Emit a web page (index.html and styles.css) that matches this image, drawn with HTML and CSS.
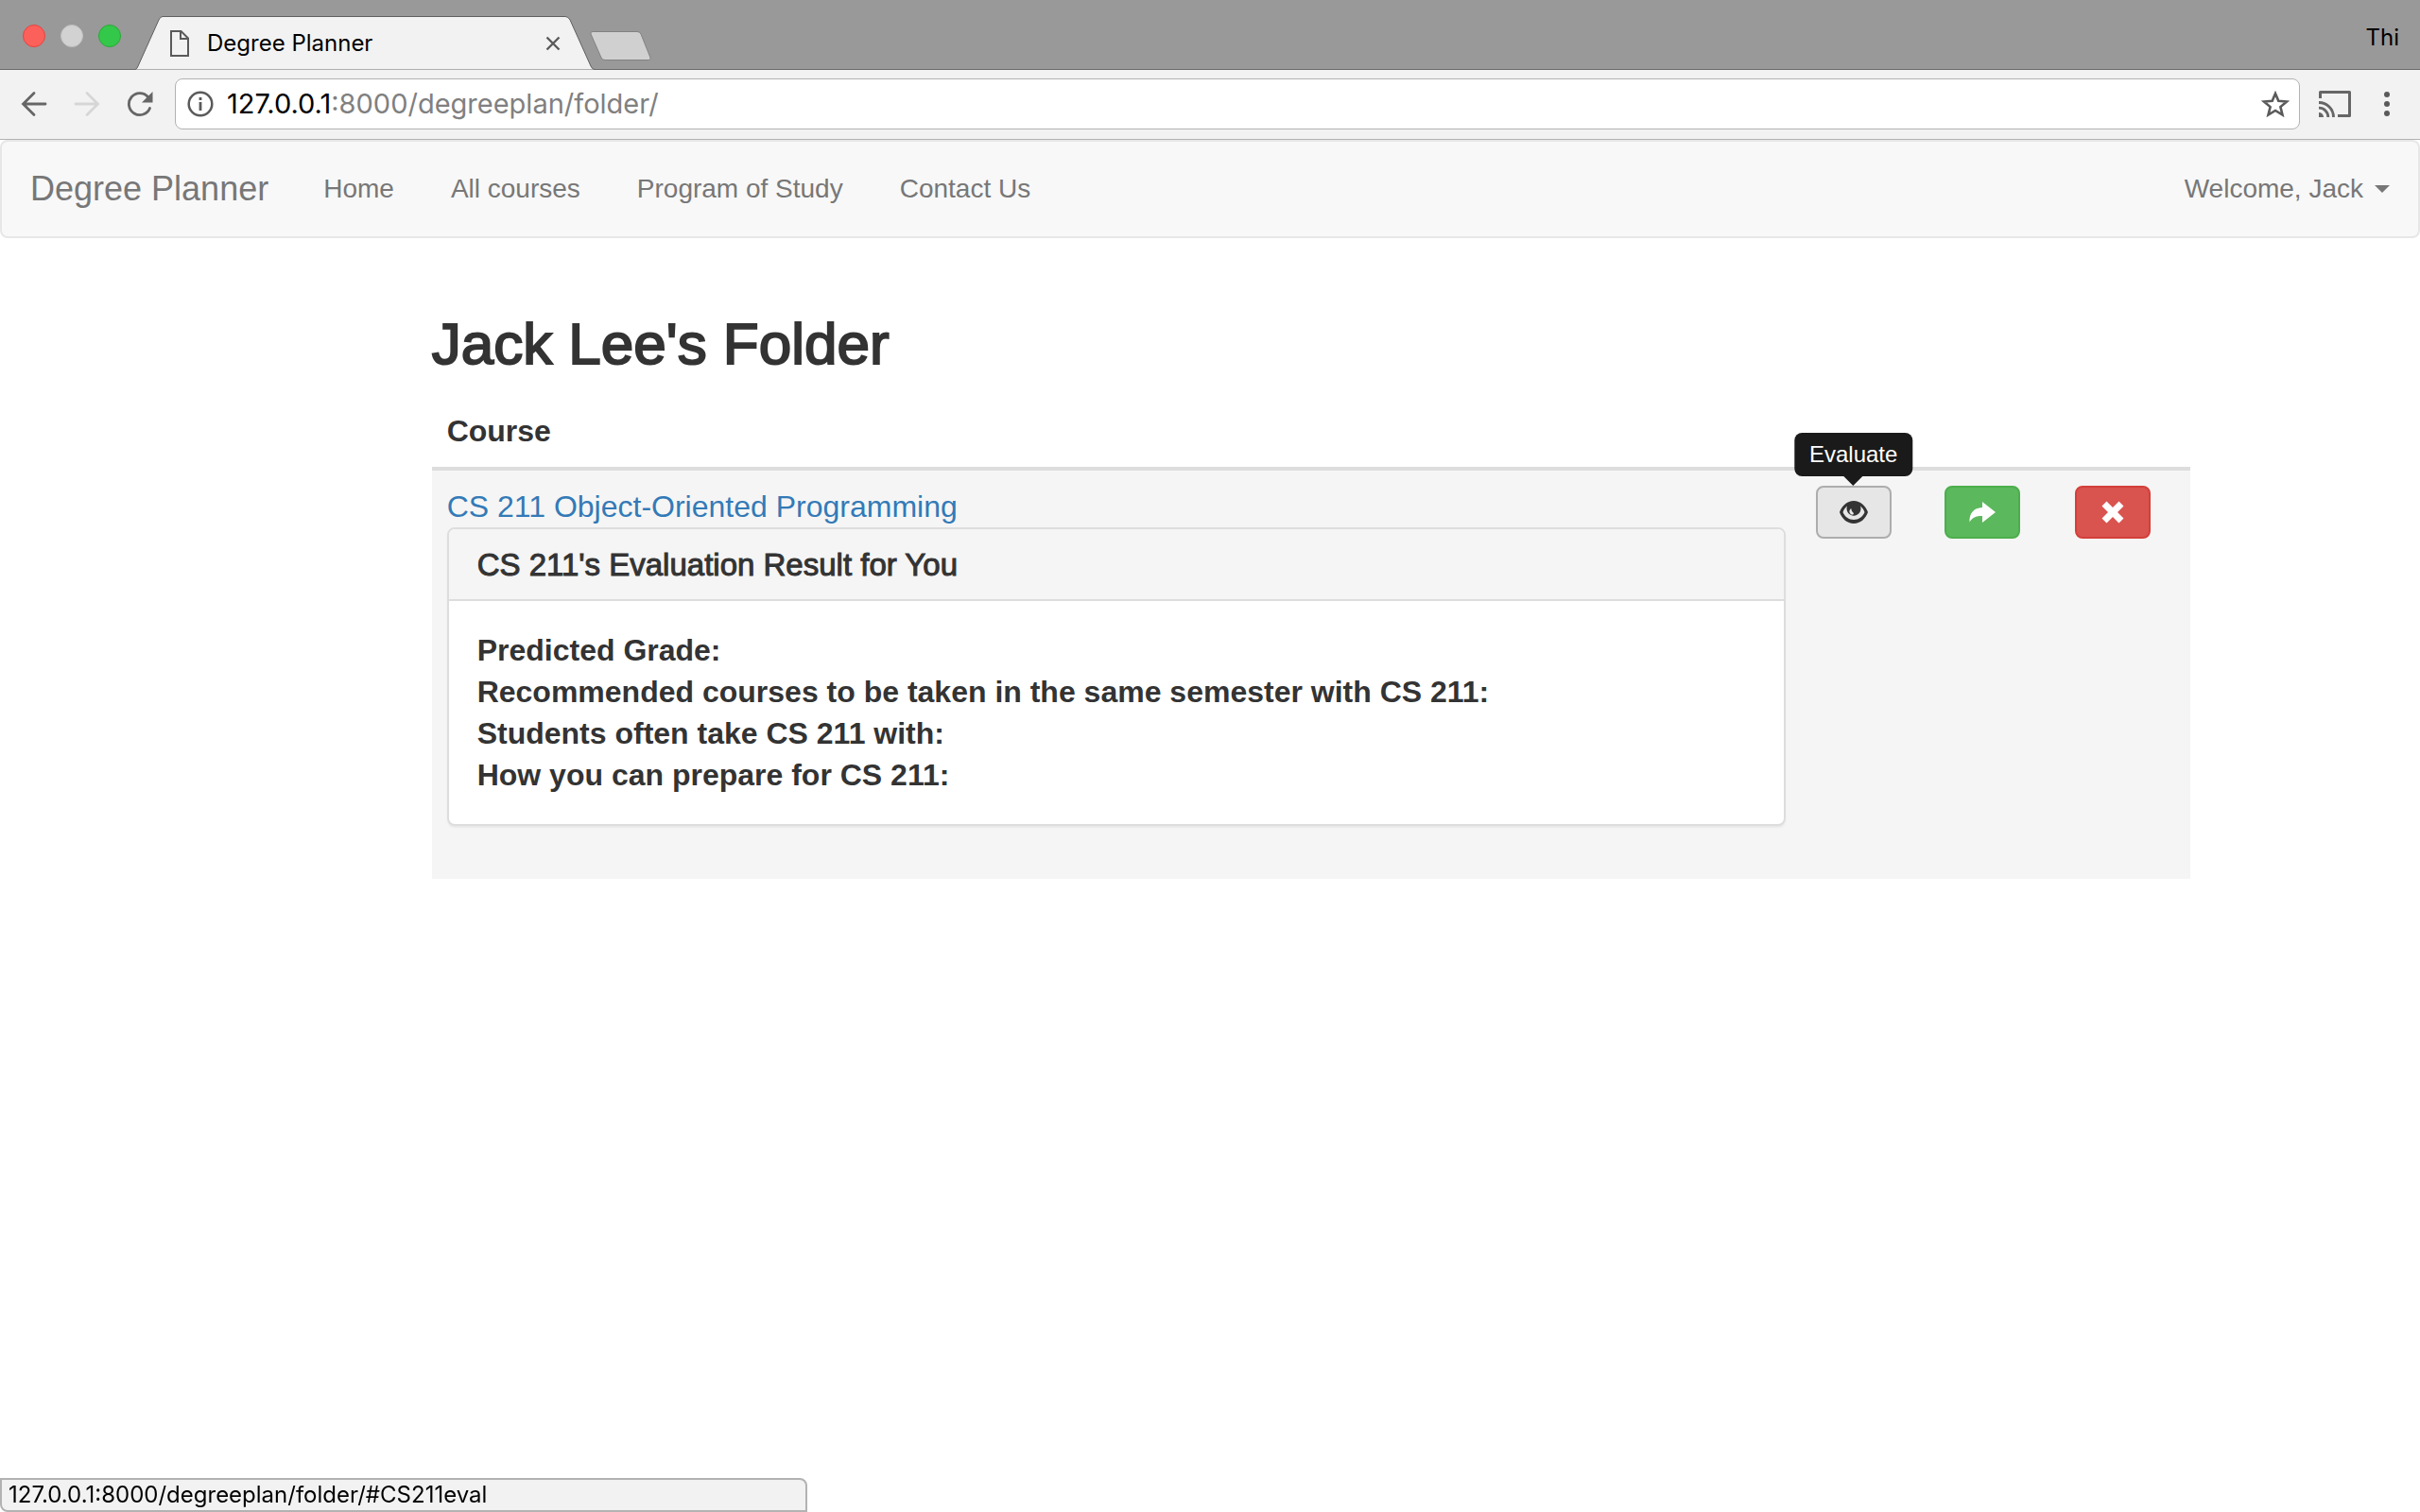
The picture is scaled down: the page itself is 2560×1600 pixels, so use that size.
FILE: index.html
```html
<!DOCTYPE html>
<html lang="en">
<head>
<meta charset="utf-8">
<title>Degree Planner</title>
<link rel="stylesheet" href="styles.css">
</head>
<body>
<header class="browser">
  <div class="tabstrip">
    <div class="lights">
      <button class="light light-close" aria-label="Close window"></button>
      <button class="light light-min" aria-label="Minimize window"></button>
      <button class="light light-max" aria-label="Maximize window"></button>
    </div>
    <div class="tab">
      <svg class="tab-shape" viewBox="0 0 486 57" preserveAspectRatio="none" aria-hidden="true"><path d="M0 56.500Q2 56 3 53L25 4Q26.500 .5 29 .5H455Q458 .5 460 4L482 53Q483 56 486 56.500" fill="#f2f2f2" stroke="#5f5f5f"/></svg>
      <svg class="page-icon" viewBox="0 0 22 28" aria-hidden="true"><path d="M2 1H12.500L20 8.500V27H2ZM12 1V9H20" fill="none" stroke="#5a5a5a" stroke-width="2"/></svg>
      <span class="tab-title">Degree Planner</span>
      <button class="tab-close" aria-label="Close tab"><svg width="16" height="16" viewBox="0 0 16 16"><path d="M1.500 1.500 14.500 14.500M14.500 1.500 1.500 14.500" stroke="#5a5a5a" stroke-width="2.400"/></svg></button>
    </div>
    <button class="new-tab" aria-label="New tab"><svg width="66" height="32" viewBox="0 0 66 32"><path d="M3 .5H50Q53 .5 54 3L64 28Q65 30.500 62 30.500H16Q13 30.500 12 28L1 3Q0 .5 3 .5Z" fill="#d0d0d0" stroke="#828282"/></svg></button>
    <span class="profile">Thi</span>
  </div>
  <div class="toolbar">
    <button class="tool" aria-label="Back"><svg width="28" height="28" viewBox="0 0 28 28"><path d="M26 14H3M14 2.500 2.500 14 14 25.500" fill="none" stroke="#666" stroke-width="2.800" stroke-linecap="round"/></svg></button>
    <button class="tool" aria-label="Forward"><svg width="28" height="28" viewBox="0 0 28 28"><path d="M2 14H25M14 2.500 25.500 14 14 25.500" fill="none" stroke="#d6d6d6" stroke-width="2.800" stroke-linecap="round"/></svg></button>
    <button class="tool" aria-label="Reload"><svg width="28" height="28" viewBox="0 0 28 28"><path d="M24.500 18.500A11.500 11.500 0 1 1 22.500 6.500" fill="none" stroke="#666" stroke-width="2.800" stroke-linecap="round"/><path d="M27.500 1V12.500H16Z" fill="#666"/></svg></button>
    <form class="omnibox">
      <svg width="28" height="28" viewBox="0 0 28 28" aria-hidden="true"><circle cx="14" cy="14" r="12.300" fill="none" stroke="#5a5a5a" stroke-width="2.500"/><path d="M14 12V21M14 7V10" stroke="#5a5a5a" stroke-width="2.800"/></svg>
      <label class="url-host" for="url">127.0.0.1</label>
      <input class="url" id="url" type="text" value=":8000/degreeplan/folder/">
      <button class="star" type="button" aria-label="Bookmark"><svg width="30" height="28" viewBox="0 0 30 28"><path d="M15 3 18.300 10.800 27 11.500 20.400 17.100 22.500 25.500 15 21 7.500 25.500 9.600 17.100 3 11.500 11.700 10.800Z" fill="none" stroke="#5a5a5a" stroke-width="2.600"/></svg></button>
    </form>
    <button class="tool" aria-label="Cast"><svg width="34" height="28" viewBox="0 0 34 28"><path d="M1.500 8V1.500H32.500V26.500H20" fill="none" stroke="#666" stroke-width="3" stroke-linejoin="round"/><path d="M0 12.500A15.500 15.500 0 0 1 15.500 28M0 18.200A9.800 9.800 0 0 1 9.800 28" fill="none" stroke="#666" stroke-width="2.800"/><path d="M0 23A5 5 0 0 1 5 28H0Z" fill="#666"/></svg></button>
    <button class="tool tool-menu" aria-label="Menu"><svg width="6" height="28" viewBox="0 0 6 28"><g fill="#5a5a5a"><circle cx="3" cy="4" r="3"/><circle cx="3" cy="14" r="3"/><circle cx="3" cy="24" r="3"/></g></svg></button>
  </div>
</header>

<nav class="navbar">
  <a class="brand" href="#">Degree Planner</a>
  <a class="nav-link" href="#">Home</a>
  <a class="nav-link" href="#">All courses</a>
  <a class="nav-link" href="#">Program of Study</a>
  <a class="nav-link" href="#">Contact Us</a>
  <a class="nav-link nav-user" href="#">Welcome, Jack <span class="caret"></span></a>
</nav>

<main class="content">
  <h1>Jack Lee's Folder</h1>
  <table class="courses">
    <thead>
      <tr><th scope="col">Course</th><th class="col-evaluate"></th><th class="col-action"></th><th class="col-action"></th></tr>
    </thead>
    <tbody>
      <tr>
        <td>
          <a class="course-link" href="#">CS 211 Object-Oriented Programming</a>
          <section class="panel">
            <h2 class="panel-heading">CS 211's Evaluation Result for You</h2>
            <div class="panel-body">
              <p>Predicted Grade:</p>
              <p>Recommended courses to be taken in the same semester with CS 211:</p>
              <p>Students often take CS 211 with:</p>
              <p>How you can prepare for CS 211:</p>
            </div>
          </section>
        </td>
        <td>
          <div class="action">
            <button class="btn btn-default" aria-label="Evaluate"><svg width="30" height="24" viewBox="0 0 30 24"><path fill="#333" fill-rule="evenodd" d="M15 0C22 0 27.500 5 30 12 27.500 19 22 24 15 24S2.500 19 0 12C2.500 5 8 0 15 0ZM8 5.500C5.800 7.200 4.300 9.500 3.500 12 5.500 16.800 9.800 20 15 20S24.500 16.800 26.500 12C25.700 9.500 24.200 7.200 22 5.500A7.500 7.500 0 1 1 8 5.500ZM11.500 8.500C10.300 10 10 11.500 11 13 12 14.800 13.500 15 14.500 14.300 15.500 13.500 14.500 12.500 13.500 11.500 12.500 10.500 12.700 9.500 12.500 8.500Z"/></svg></button>
            <span class="tooltip" role="tooltip">Evaluate</span>
          </div>
        </td>
        <td><button class="btn btn-success" aria-label="Share"><svg width="28" height="22" viewBox="0 0 28 22"><path fill="#fff" d="M14 0 28 11 14 22V15C7 15 3.500 16.500 .5 21.500 0 12 5 6.500 14 6Z"/></svg></button></td>
        <td><button class="btn btn-danger" aria-label="Remove"><svg width="24" height="24" viewBox="0 0 24 24"><path fill="#fff" d="M5.500 .5 12 7 18.500 .5 23.500 5.500 17 12 23.500 18.500 18.500 23.500 12 17 5.500 23.500 .5 18.500 7 12 .5 5.500Z"/></svg></button></td>
      </tr>
    </tbody>
  </table>
</main>

<div class="status">127.0.0.1:8000/degreeplan/folder/#CS211eval</div>
</body>
</html>
```
FILE: styles.css
```css
* { box-sizing: border-box; }
body {
  margin: 0;
  background: #fff;
  color: #333;
  font: 32px/44px "Liberation Sans", Arial, sans-serif;
}
button { margin: 0; padding: 0; border: 0; background: none; }
svg { display: block; flex: none; }
a { text-decoration: none; }

/* browser chrome */
.browser { font-family: Inter, "Liberation Sans", sans-serif; color: #000; }
.tabstrip {
  display: flex;
  height: 74px;
  padding: 0 22px 0 24px;
  background: #999;
  border-bottom: 1px solid #6a6a6a;
}
.lights { display: flex; gap: 16px; padding-top: 26px; }
.light { width: 24px; height: 24px; border-radius: 50%; border: 1px solid; }
.light-close { background: #fc605b; border-color: #e5443f; }
.light-min { background: #d2d2d2; border-color: #c0c0c0; }
.light-max { background: #34c84a; border-color: #2aa938; }
.tab {
  position: relative;
  display: flex;
  align-items: center;
  width: 486px;
  height: 57px;
  margin: 17px 0 0 15px;
  padding: 0 36px;
  font-size: 24px;
}
.tab-shape { position: absolute; left: 0; top: 0; width: 100%; height: 100%; }
.page-icon { position: relative; width: 22px; height: 28px; }
.tab-title { position: relative; flex: 1; padding-left: 18px; }
.tab-close { position: relative; }
.new-tab { align-self: flex-start; margin: 33px 0 0 -5px; }
.profile { margin-left: auto; padding-top: 18px; font-size: 24px; }
.toolbar {
  display: flex;
  align-items: center;
  gap: 28px;
  height: 74px;
  padding: 0 32px 2px 22px;
  background: #f2f2f2;
  border-bottom: 1px solid #b2b2b2;
}
.omnibox {
  display: flex;
  flex: 1;
  align-items: center;
  height: 54px;
  margin: 0 -8px 0 -5px;
  padding: 0 10px 0 12px;
  background: #fff;
  border: 1px solid #b2b2b2;
  border-radius: 8px;
  font-size: 29px;
}
.url-host { padding-left: 14px; }
.url {
  flex: 1;
  min-width: 0;
  padding: 0;
  border: 0;
  outline: 0;
  background: none;
  color: #808080;
  font: inherit;
}
.tool-menu { padding-left: 7px; }

/* site navigation */
.navbar {
  display: flex;
  align-items: center;
  height: 104px;
  background: #f8f8f8;
  border: 2px solid #e7e7e7;
  border-radius: 8px;
}
.brand { padding: 0 28px 0 30px; color: #777; font-size: 36px; }
.nav-link { padding: 0 30px; color: #777; font-size: 28px; }
.nav-user { display: flex; align-items: center; gap: 12px; margin-left: auto; }
.caret { border: 8px solid transparent; border-top-color: #777; border-bottom: 0; }

/* folder */
.content { width: 75%; margin-left: 16.6667%; padding: 78px 30px 0; }
h1 {
  margin: 0 0 20px;
  font-size: 62px;
  line-height: 68px;
  font-weight: 400;
  -webkit-text-stroke: 2px #333;
}
.courses { width: 100%; table-layout: fixed; border-collapse: separate; border-spacing: 0; }
.col-evaluate { width: 136px; }
.col-action { width: 138px; }
th { padding: 16px; text-align: left; border-bottom: 4px solid #ddd; }
td { padding: 16px; vertical-align: top; background: #f5f5f5; }
.course-link { display: block; color: #337ab7; }
.panel {
  margin-bottom: 40px;
  background: #fff;
  border: 2px solid #ddd;
  border-radius: 8px;
  box-shadow: 0 2px 2px rgba(0, 0, 0, .05);
}
.panel-heading {
  margin: 0;
  padding: 20px 30px 18px;
  background: #f5f5f5;
  border-bottom: 2px solid #ddd;
  border-radius: 6px 6px 0 0;
  font-size: 33px;
  line-height: 36px;
  font-weight: 400;
  -webkit-text-stroke: 1px #333;
}
.panel-body { padding: 30px; font-weight: 700; }
.panel-body p { margin: 0; }
.action { position: relative; width: 80px; }
.btn {
  display: flex;
  align-items: center;
  justify-content: center;
  width: 80px;
  height: 56px;
  border: 2px solid;
  border-radius: 8px;
}
.btn-default { background: #e6e6e6; border-color: #adadad; }
.btn-success { background: #5cb85c; border-color: #4cae4c; }
.btn-danger { background: #d9534f; border-color: #d43f3a; }
.tooltip {
  position: absolute;
  bottom: 66px;
  left: 50%;
  transform: translateX(-50%);
  padding: 6px 16px;
  background: #1a1a1a;
  border-radius: 8px;
  color: #fff;
  font-size: 24px;
  line-height: 34px;
}
.tooltip::after {
  content: "";
  position: absolute;
  top: 100%;
  left: 50%;
  margin-left: -10px;
  border: 10px solid transparent;
  border-top-color: #1a1a1a;
  border-bottom: 0;
}

/* link preview in the window corner */
.status {
  position: fixed;
  left: 0;
  bottom: 0;
  width: 854px;
  max-width: 100%;
  padding-left: 7px;
  background: #f2f2f2;
  border: 2px solid #b2b2b2;
  border-radius: 0 8px 0 8px;
  color: #000;
  font: 24px/32px Inter, "Liberation Sans", sans-serif;
}
```
